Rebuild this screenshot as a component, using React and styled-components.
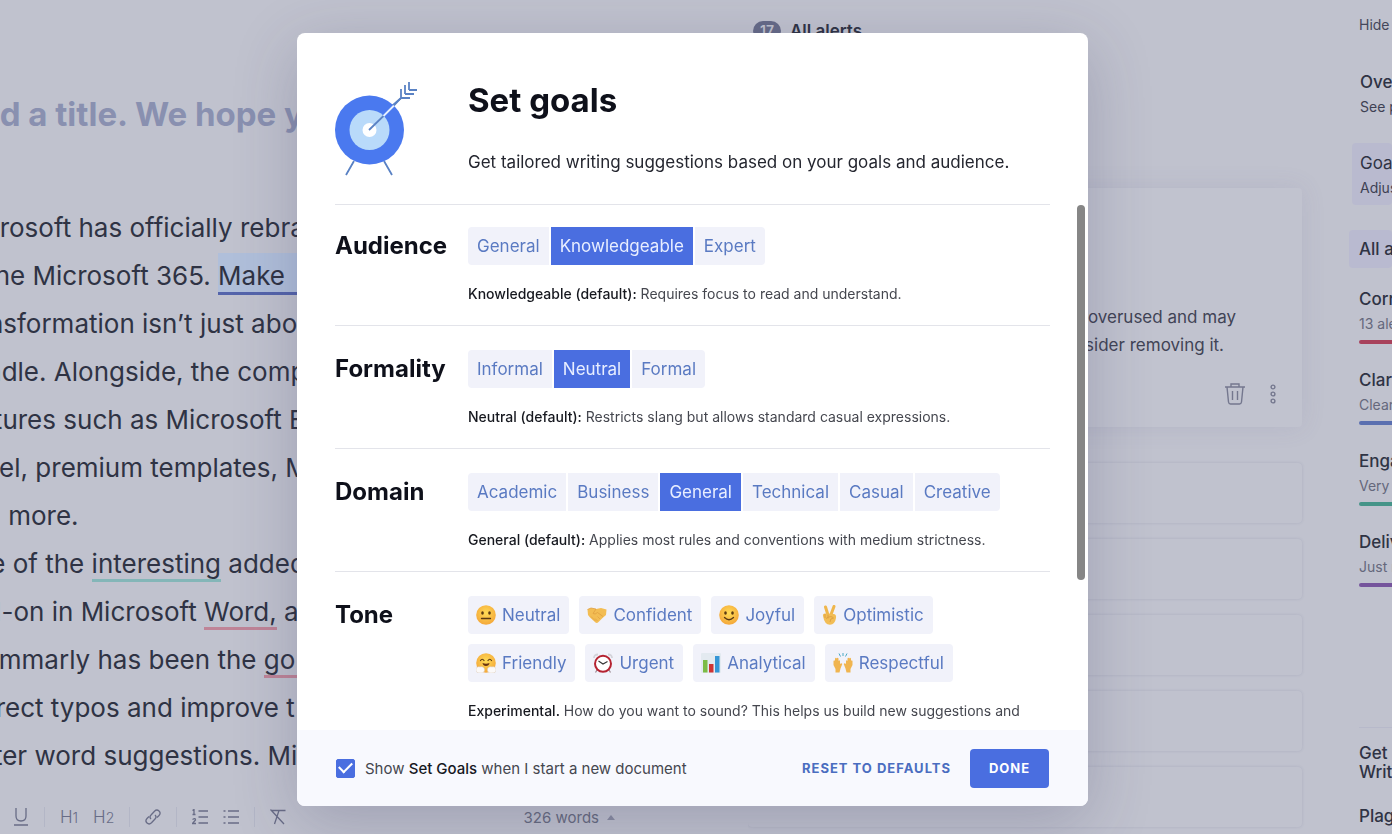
import React, { useState } from 'react';
import styled, { createGlobalStyle } from 'styled-components';

const audience = ['General', 'Knowledgeable', 'Expert'];
const formality = ['Informal', 'Neutral', 'Formal'];
const domain = ['Academic', 'Business', 'General', 'Technical', 'Casual', 'Creative'];

const scores = [
  { name: 'Correctness', note: '13 alerts', color: '#a8425c' },
  { name: 'Clarity', note: 'Clear', color: '#5a6fb0' },
  { name: 'Engagement', note: 'Very engaging', color: '#459488' },
  { name: 'Delivery', note: 'Just right', color: '#75549c' },
];

const TargetIcon = () => (
  <svg width="84" height="98" viewBox="1 0 84 98" fill="none" aria-hidden="true">
    <g stroke="#5a82c4" strokeWidth="1.8">
      <path d="M20 83L12 97M50 83L58 97" />
      <path d="M58 28L67 20M67 20V11M67 20H76M71 16V7M71 16H80M75 12V4M75 12H83" />
    </g>
    <circle cx="35.5" cy="52" r="34.5" fill="#4a79ef" />
    <circle cx="35.5" cy="52" r="20" fill="#b9dafa" />
    <circle cx="35.5" cy="52" r="7" fill="#fff" />
    <path d="M35 52L50 37.5" stroke="#5a82c4" strokeWidth="1.8" />
    <path d="M49.5 38L60 27.5" stroke="#e6f0ff" strokeWidth="1.8" />
    <path d="M60 27.5L67 20" stroke="#5a82c4" strokeWidth="1.8" />
  </svg>
);

const FaceBase = () => (
  <>
    <defs>
      <radialGradient id="face" cx="0.5" cy="0.4" r="0.6">
        <stop offset="0" stopColor="#ffdc55" />
        <stop offset="1" stopColor="#f4a73a" />
      </radialGradient>
    </defs>
    <circle cx="10" cy="10" r="9.8" fill="url(#face)" />
  </>
);

const NeutralFace = () => (
  <Emoji viewBox="0 0 20 20">
    <FaceBase />
    <ellipse cx="6.5" cy="8" rx="1.3" ry="1.8" fill="#5b3a12" />
    <ellipse cx="13.5" cy="8" rx="1.3" ry="1.8" fill="#5b3a12" />
    <path d="M5.5 13.5H14.5" stroke="#5b3a12" strokeWidth="1.3" strokeLinecap="round" />
  </Emoji>
);

const SmileFace = () => (
  <Emoji viewBox="0 0 20 20">
    <FaceBase />
    <ellipse cx="6.5" cy="8" rx="1.3" ry="1.7" fill="#5b3a12" />
    <ellipse cx="13.5" cy="8" rx="1.3" ry="1.7" fill="#5b3a12" />
    <path d="M5.5 12.5Q10 17 14.5 12.5" fill="none" stroke="#5b3a12" strokeWidth="1.3" strokeLinecap="round" />
  </Emoji>
);

const HugFace = () => (
  <Emoji viewBox="0 0 20 20">
    <FaceBase />
    <path d="M4.5 7.5Q6.3 5 8 7.5M12 7.5Q13.7 5 15.5 7.5" fill="none" stroke="#5b3a12" strokeWidth="1.2" strokeLinecap="round" />
    <path d="M6.5 10Q10 11.5 13.5 10Q13 13 10 13T6.5 10Z" fill="#6b3410" />
    <path d="M0 17.5C-0.5 14.5 2 13 4 14C6 13 9 14.5 8.5 17.5C8 20 5.5 20.5 3.5 20C1.5 20 0.5 19.5 0 17.5Z" fill="#fbf9f8" stroke="#dccbb8" strokeWidth="0.6" />
    <path d="M20 17.5C20.5 14.5 18 13 16 14C14 13 11 14.5 11.5 17.5C12 20 14.5 20.5 16.5 20C18.5 20 19.5 19.5 20 17.5Z" fill="#fbf9f8" stroke="#dccbb8" strokeWidth="0.6" />
  </Emoji>
);

const Handshake = () => (
  <Emoji viewBox="0 0 20 20">
    <path d="M0.5 4.5L4 3L9 4L14 3L19.5 4.5L19 10L15.5 13L11.5 17Q10 18.5 8.5 17.5L3 12.5L1 10Z" fill="#f3bd53" />
    <path d="M0.5 4.5L4 3L9 4L6 8.5Q8 10 10.5 7.5L16 11.5" fill="none" stroke="#dfa040" strokeWidth="0.8" />
    <path d="M8 13.5L10.5 16M10.5 11.5L13 14M4 11.5L8.5 16" stroke="#dfa040" strokeWidth="0.7" />
  </Emoji>
);

const Victory = () => (
  <Emoji viewBox="0 0 15 20" $width={15}>
    <path d="M6 10L3.5 2M9 9.5L12 1.5" stroke="#efb64c" strokeWidth="3" strokeLinecap="round" />
    <path d="M1 11Q0.5 8.5 3 8.5L12 9Q14.5 9.5 14 13Q13 19.5 8 19.8Q2.5 19.8 1 11Z" fill="#f2bd55" />
    <path d="M3 9V13M6 9.5V13.5M4 13.5Q9 10 11.5 13Q8 13 8 17" fill="none" stroke="#d99a40" strokeWidth="0.8" />
  </Emoji>
);

const AlarmClock = () => (
  <Emoji viewBox="0 0 20 20">
    <path d="M1 5Q1 1.5 5 1.5M19 5Q19 1.5 15 1.5" fill="none" stroke="#d3d3da" strokeWidth="1.8" />
    <path d="M4 17L2.5 19.5M16 17L17.5 19.5" stroke="#9b8b93" strokeWidth="1.2" />
    <circle cx="10" cy="10.8" r="8" fill="#fff" stroke="#b52331" strokeWidth="2" />
    <path d="M5.5 8L10 11L14.5 8.5" fill="none" stroke="#333" strokeWidth="1.1" />
  </Emoji>
);

const BarChart = () => (
  <Emoji viewBox="0 0 20 20">
    <rect width="20" height="20" rx="1" fill="#e3eaf0" />
    <rect x="2" y="7" width="4.5" height="12.5" fill="#7cbc45" />
    <rect x="8" y="11" width="4.5" height="8.5" fill="#cf3434" />
    <rect x="14" y="3" width="4.5" height="16.5" fill="#3596d6" />
  </Emoji>
);

const RaisedHands = () => (
  <Emoji viewBox="0 0 20 20">
    <path d="M10 0V3M6 0.5L7.5 3.5M14 0.5L12.5 3.5" stroke="#4aa9c4" strokeWidth="1" />
    <path d="M2.5 19.5V16L0.5 12V8Q1.2 6.5 2 8V5.5Q3 4 3.7 5.5Q4.7 4 5.5 5.5V8Q6.5 6.5 7 8V11Q8.5 9.5 9.3 11L7.5 15.5L6.5 19.5Z" fill="#f0b550" />
    <path d="M17.5 19.5V16L19.5 12V8Q18.8 6.5 18 8V5.5Q17 4 16.3 5.5Q15.3 4 14.5 5.5V8Q13.5 6.5 13 8V11Q11.5 9.5 10.7 11L12.5 15.5L13.5 19.5Z" fill="#f0b550" />
  </Emoji>
);

const tones = [
  [
    { name: 'Neutral', Icon: NeutralFace },
    { name: 'Confident', Icon: Handshake },
    { name: 'Joyful', Icon: SmileFace },
    { name: 'Optimistic', Icon: Victory },
  ],
  [
    { name: 'Friendly', Icon: HugFace },
    { name: 'Urgent', Icon: AlarmClock },
    { name: 'Analytical', Icon: BarChart },
    { name: 'Respectful', Icon: RaisedHands },
  ],
];

const ChoiceRow = ({ label, options, initial, children }) => {
  const [value, setValue] = useState(initial);
  return (
    <Section>
      <SectionTitle>{label}</SectionTitle>
      <div>
        <Segments role="group" aria-label={label}>
          {options.map((option) => (
            <Segment
              key={option}
              type="button"
              aria-pressed={option === value}
              $active={option === value}
              onClick={() => setValue(option)}
            >
              {option}
            </Segment>
          ))}
        </Segments>
        <Description>{children}</Description>
      </div>
    </Section>
  );
};

const EditorPane = () => (
  <Editor>
    <Article>
      <DocTitle>Add a title. We hope y</DocTitle>
      <Paragraph>
        Microsoft has officially rebra
        <br />
        to the Microsoft 365. <Highlight>Make</Highlight>
        <br />
        transformation isn’t just abo
        <br />
        bundle. Alongside, the comp
        <br />
        features such as Microsoft E
        <br />
        Excel, premium templates, M
        <br />
        and more.
      </Paragraph>
      <Paragraph>
        One of the <Mark $color="#84b6b8">interesting</Mark> added
        <br />
        add-on in Microsoft <Mark $color="#bf8497">Word,</Mark> a
        <br />
        Grammarly has been the <Mark $color="#bf8497">go to</Mark>
        <br />
        correct typos and improve t
        <br />
        better word suggestions. Mi
      </Paragraph>
    </Article>
    <Toolbar>
      <Tool type="button" aria-label="Underline">
        <svg width="16" height="18" viewBox="0 0 16 18">
          <path d="M3 0V8Q3 13 8 13T13 8V0M1 17H15" />
        </svg>
      </Tool>
      <Divider />
      <Tool type="button">
        H<small>1</small>
      </Tool>
      <Tool type="button">
        H<small>2</small>
      </Tool>
      <Divider />
      <Tool type="button" aria-label="Link">
        <svg width="16" height="16" viewBox="0 0 16 16">
          <path d="M6 10Q4 8 6 6L9.5 2.2Q11.8 0 14 2T14 6.5L12 8.5M10 6Q12 8 10 10L6.5 13.8Q4.2 16 2 14T2 9.5L4 7.5" />
        </svg>
      </Tool>
      <Divider />
      <Tool type="button" aria-label="Numbered list">
        <svg width="16" height="16" viewBox="0 0 16 16">
          <path d="M6.5 2H16M6.5 8H16M6.5 14H16M0.5 1.5L2 0.5V5.5M0.5 5.5H3.5M0.5 10.5Q3.5 8.5 3.5 11L0.5 14.5H4" />
        </svg>
      </Tool>
      <Tool type="button" aria-label="Bulleted list">
        <svg width="16" height="16" viewBox="0 0 16 16">
          <path d="M5 2H16M5 8H16M5 14H16M0.5 2H2.5M0.5 8H2.5M0.5 14H2.5" />
        </svg>
      </Tool>
      <Divider />
      <Tool type="button" aria-label="Clear formatting">
        <svg width="16" height="16" viewBox="0 0 16 16">
          <path d="M2 1.5H15.5M9 1.5L4.5 15M0.5 0.5L14 15" />
        </svg>
      </Tool>
      <WordCount type="button">
        326 words
        <svg width="8" height="5" viewBox="0 0 8 5">
          <path d="M4 0L8 5H0Z" />
        </svg>
      </WordCount>
    </Toolbar>
  </Editor>
);

const AlertsPane = () => (
  <Alerts>
    <AlertsHeader>
      <Count>17</Count>
      All alerts
    </AlertsHeader>
    <AlertCard>
      <AlertLine $inset={40}>overused and may</AlertLine>
      <AlertLine $inset={52}>consider removing it.</AlertLine>
      <CardActions>
        <IconButton type="button" aria-label="Dismiss">
          <svg width="20" height="22" viewBox="0 0 20 22">
            <path d="M0 4H20M6 4V1H14V4M2 4L3.5 19Q3.8 21 5.5 21H14.5Q16.2 21 16.5 19L18 4M7.5 8V17M12.5 8V17" />
          </svg>
        </IconButton>
        <IconButton type="button" aria-label="More">
          <svg width="6" height="20" viewBox="0 0 6 20">
            <circle cx="3" cy="3" r="1.9" />
            <circle cx="3" cy="10" r="1.9" />
            <circle cx="3" cy="17" r="1.9" />
          </svg>
        </IconButton>
      </CardActions>
    </AlertCard>
    <SmallCard />
    <SmallCard />
    <SmallCard />
    <SmallCard />
    <SmallCard />
  </Alerts>
);

const SidePane = () => (
  <Side>
    <HideLink href="#hide">Hide Assistant</HideLink>
    <SideItem>
      <SideName>Overall score</SideName>
      <SideNote>See performance</SideNote>
    </SideItem>
    <SideItem $filled>
      <SideName $light>Goals</SideName>
      <SideNote>Adjust goals</SideNote>
    </SideItem>
    <AllAlerts>All alerts</AllAlerts>
    {scores.map((score) => (
      <Score key={score.name}>
        <SideName>{score.name}</SideName>
        <SideNote $faded>{score.note}</SideNote>
        <ScoreBar $color={score.color} />
      </Score>
    ))}
    <SideFooter>
      <ExpertHelp>
        Get Expert
        <br />
        Writing Help
      </ExpertHelp>
      <SideName>Plagiarism</SideName>
    </SideFooter>
  </Side>
);

const GoalsDialog = () => {
  const [showAgain, setShowAgain] = useState(true);
  return (
    <Overlay>
      <Dialog role="dialog" aria-labelledby="goals-title">
        <Header>
          <TargetIcon />
          <div>
            <Title id="goals-title">Set goals</Title>
            <Subtitle>Get tailored writing suggestions based on your goals and audience.</Subtitle>
          </div>
        </Header>
        <Body>
          <Sections>
            <ChoiceRow label="Audience" options={audience} initial="Knowledgeable">
              <b>Knowledgeable (default):</b> Requires focus to read and understand.
            </ChoiceRow>
            <ChoiceRow label="Formality" options={formality} initial="Neutral">
              <b>Neutral (default):</b> Restricts slang but allows standard casual expressions.
            </ChoiceRow>
            <ChoiceRow label="Domain" options={domain} initial="General">
              <b>General (default):</b> Applies most rules and conventions with medium strictness.
            </ChoiceRow>
            <Section>
              <SectionTitle>Tone</SectionTitle>
              <div>
                <ToneRows>
                  {tones.map((row) => (
                    <ToneRow key={row[0].name}>
                      {row.map(({ name, Icon }) => (
                        <ToneButton key={name} type="button">
                          <Icon />
                          {name}
                        </ToneButton>
                      ))}
                    </ToneRow>
                  ))}
                </ToneRows>
                <Description>
                  <b>Experimental.</b> How do you want to sound? This helps us build new suggestions and
                </Description>
              </div>
            </Section>
          </Sections>
          <Scrollbar />
        </Body>
        <Footer>
          <CheckLabel>
            <Checkbox
              type="checkbox"
              checked={showAgain}
              onChange={(e) => setShowAgain(e.target.checked)}
            />
            <span>
              Show <b>Set Goals</b> when I start a new document
            </span>
          </CheckLabel>
          <ResetButton type="button">Reset to defaults</ResetButton>
          <DoneButton type="button">Done</DoneButton>
        </Footer>
      </Dialog>
    </Overlay>
  );
};

const App = () => (
  <>
    <GlobalStyle />
    <Page>
      <EditorPane />
      <AlertsPane />
      <SidePane />
    </Page>
    <GoalsDialog />
  </>
);

export default App;

const GlobalStyle = createGlobalStyle`
  * {
    box-sizing: border-box;
  }

  body {
    margin: 0;
    font-family: Inter, 'Liberation Sans', sans-serif;
    background: #c0c2ce;
    color: #2f3344;
  }

  h1, h2, p {
    margin: 0;
  }

  button {
    font-family: inherit;
    border: 0;
    padding: 0;
    background: none;
    cursor: pointer;
  }
`;

const Page = styled.div`
  display: grid;
  grid-template-columns: minmax(0, 748fr) minmax(0, 596fr) 48px;
  height: 100vh;
  overflow: hidden;
`;

const Editor = styled.main`
  display: flex;
  flex-direction: column;
  justify-content: space-between;
  overflow: hidden;
`;

const Article = styled.article`
  margin-left: -45px;
  padding-top: 90px;
  white-space: nowrap;
`;

const DocTitle = styled.h1`
  margin-bottom: 66px;
  font-size: 33px;
  line-height: 48px;
  font-weight: 700;
  color: #8990b0;
`;

const Paragraph = styled.p`
  font-size: 26px;
  line-height: 48px;
`;

const Mark = styled.span`
  border-bottom: 3px solid ${({ $color }) => $color};
`;

const Highlight = styled.span`
  padding: 7px 24px 1px 0;
  background: #b0bfda;
  border-bottom: 3px solid #5464ab;
`;

const Toolbar = styled.div`
  display: flex;
  align-items: center;
  height: 34px;
  padding: 0 133px 0 13px;
  gap: 15px;
`;

const Tool = styled.button`
  min-width: 16px;
  font-size: 17px;
  font-weight: 300;
  line-height: 20px;
  color: #686c86;

  small {
    font-size: 14px;
  }

  svg {
    display: block;
    fill: none;
    stroke: #686c86;
    stroke-width: 1.3;
  }
`;

const Divider = styled.span`
  width: 1px;
  height: 20px;
  background: #b3b6c6;
`;

const WordCount = styled.button`
  display: flex;
  align-items: center;
  gap: 8px;
  margin-left: auto;
  font-size: 15px;
  color: #686c80;

  svg {
    fill: #8a8da2;
  }
`;

const Alerts = styled.section`
  display: flex;
  flex-direction: column;
  gap: 16px;
  padding: 21px 42px 0 0;
  overflow: hidden;
`;

const AlertsHeader = styled.h2`
  display: flex;
  align-items: center;
  gap: 9px;
  height: 20px;
  margin-bottom: 131px;
  padding-left: 5px;
  font-size: 17px;
  font-weight: 600;
`;

const Count = styled.span`
  padding: 0 7px;
  border-radius: 10px;
  font-size: 14px;
  line-height: 20px;
  background: #666b88;
  color: #c0c2ce;
`;

const AlertCard = styled.article`
  flex: none;
  display: flex;
  flex-direction: column;
  align-items: flex-end;
  height: 239px;
  margin-bottom: 20px;
  padding: 115px 26px 0 0;
  border-radius: 4px;
  background: #c1c3cf;
  box-shadow: 0 0 24px rgba(100, 100, 150, 0.12);
`;

const AlertLine = styled.p`
  margin-right: ${({ $inset }) => $inset}px;
  white-space: nowrap;
  font-size: 17px;
  line-height: 28px;
  color: #414456;
`;

const CardActions = styled.div`
  display: flex;
  align-items: center;
  gap: 25px;
  margin-top: 24px;
`;

const IconButton = styled.button`
  svg {
    display: block;
    fill: none;
    stroke: #74778e;
    stroke-width: 1.4;
  }
`;

const SmallCard = styled.div`
  flex: none;
  height: 60px;
  border-radius: 4px;
  background: #c0c2ce;
  box-shadow: 0 0 3px rgba(90, 95, 140, 0.2);
`;

const Side = styled.aside`
  display: flex;
  flex-direction: column;
  padding: 14px 0 0 5px;
  overflow: hidden;
  white-space: nowrap;
`;

const HideLink = styled.a`
  margin-bottom: 26px;
  padding-left: 10px;
  font-size: 14px;
  line-height: 22px;
  color: #44475a;
  text-decoration: none;
`;

const SideItem = styled.div`
  margin-left: 3px;
  height: 62px;
  margin-bottom: ${({ $filled }) => ($filled ? '25px' : '19px')};
  padding: 8px 0 0 8px;
  border-radius: 4px;
  background: ${({ $filled }) => ($filled ? '#b9bacf' : 'none')};
`;

const SideName = styled.div`
  font-size: 17px;
  font-weight: ${({ $light }) => ($light ? 400 : 500)};
  line-height: 24px;
`;

const SideNote = styled.div`
  font-size: 14px;
  line-height: 26px;
  color: ${({ $faded }) => ($faded ? '#65687c' : '#3e4153')};
`;

const AllAlerts = styled.div`
  margin-bottom: 19px;
  padding-left: 10px;
  border-radius: 4px;
  font-size: 17px;
  font-weight: 500;
  line-height: 38px;
  background: #b9bad0;
`;

const Score = styled.div`
  height: 81px;
  padding-left: 10px;
`;

const ScoreBar = styled.div`
  height: 4px;
  margin-top: 3px;
  border-radius: 2px 0 0 2px;
  background: ${({ $color }) => $color};
`;

const SideFooter = styled.div`
  margin: auto 0 6px 10px;
  padding-top: 16px;
  border-top: 1px solid #b7b9ca;
`;

const ExpertHelp = styled.div`
  margin-bottom: 22px;
  font-size: 17px;
  font-weight: 500;
  line-height: 19px;
`;

const Overlay = styled.div`
  position: fixed;
  inset: 0;
  display: flex;
  justify-content: center;
  padding: 33px 7px 28px 0;
`;

const Dialog = styled.section`
  display: flex;
  flex-direction: column;
  width: 100%;
  max-width: 791px;
  border-radius: 8px;
  overflow: hidden;
  background: #fff;
  box-shadow: 0 16px 64px rgba(50, 50, 90, 0.24);
`;

const Header = styled.header`
  display: grid;
  grid-template-columns: 133px 1fr;
  margin: 0 38px;
  padding: 45px 0 28px;
  border-bottom: 1px solid #e3e4ea;
`;

const Title = styled.h2`
  margin-bottom: 28px;
  font-size: 33px;
  line-height: 44px;
  font-weight: 700;
  color: #0e101a;
`;

const Subtitle = styled.p`
  font-size: 17px;
  line-height: 24px;
  color: #24262f;
`;

const Body = styled.div`
  flex: 1;
  display: flex;
  min-height: 0;
  padding: 0 3px 0 38px;
  overflow: hidden;
`;

const Sections = styled.div`
  flex: 1;
  margin-right: 27px;
`;

const Scrollbar = styled.div`
  width: 8px;
  height: 375px;
  border-radius: 4px;
  background: #868686;
`;

const Section = styled.section`
  display: grid;
  grid-template-columns: 133px 1fr;
  padding: 24px 0 19px;
  border-top: 1px solid #e3e4ea;

  &:first-child {
    padding-top: 22px;
    border-top: 0;
  }
`;

const SectionTitle = styled.h2`
  font-size: 24px;
  line-height: 38px;
  font-weight: 700;
  color: #0e101a;
`;

const Segments = styled.div`
  display: flex;
  gap: 2px;
`;

const Segment = styled.button`
  height: 38px;
  padding: 0 9px;
  font-size: 17px;
  background: ${({ $active }) => ($active ? '#4a6ee0' : '#f1f2fa')};
  color: ${({ $active }) => ($active ? '#e8eeff' : '#5a7ac2')};

  &:first-child {
    border-radius: 4px 0 0 4px;
  }

  &:last-child {
    border-radius: 0 4px 4px 0;
  }
`;

const Description = styled.p`
  margin-top: 17px;
  font-size: 14px;
  line-height: 24px;
  white-space: nowrap;
  color: #45474f;

  b {
    font-weight: 500;
    color: #16181f;
  }
`;

const ToneRows = styled.div`
  display: grid;
  gap: 10px;
`;

const ToneRow = styled.div`
  display: flex;
  gap: 10px;
`;

const ToneButton = styled.button`
  display: flex;
  align-items: center;
  gap: 6px;
  height: 38px;
  padding: 0 9px 0 8px;
  border-radius: 4px;
  font-size: 17px;
  background: #f1f2fa;
  color: #5a7ac2;
`;

const Emoji = styled.svg`
  flex: none;
  width: ${({ $width }) => $width || 20}px;
  height: 20px;
`;

const Footer = styled.footer`
  display: flex;
  align-items: center;
  flex: none;
  height: 76px;
  padding: 0 39px;
  background: #f8f9fe;
`;

const CheckLabel = styled.label`
  display: flex;
  align-items: center;
  gap: 10px;
  margin-right: auto;
  font-size: 15px;
  color: #45474f;

  b {
    font-weight: 500;
    color: #16181f;
  }
`;

const Checkbox = styled.input`
  appearance: none;
  display: grid;
  place-items: center;
  width: 19px;
  height: 19px;
  margin: 0;
  border: 1px solid #4a6ee0;
  border-radius: 2px;

  &:checked {
    background: #4a6ee0;
  }

  &:checked::before {
    content: '';
    width: 11px;
    height: 6px;
    margin-bottom: 4px;
    border: solid #fff;
    border-width: 0 0 2px 2px;
    transform: rotate(-45deg);
  }
`;

const ResetButton = styled.button`
  margin-right: 19px;
  font-size: 13px;
  font-weight: 700;
  letter-spacing: 1px;
  text-transform: uppercase;
  color: #4a6dc0;
`;

const DoneButton = styled.button`
  width: 79px;
  height: 39px;
  border-radius: 4px;
  font-size: 13px;
  font-weight: 700;
  letter-spacing: 1px;
  text-transform: uppercase;
  background: #4a6ee0;
  color: #fff;
`;
